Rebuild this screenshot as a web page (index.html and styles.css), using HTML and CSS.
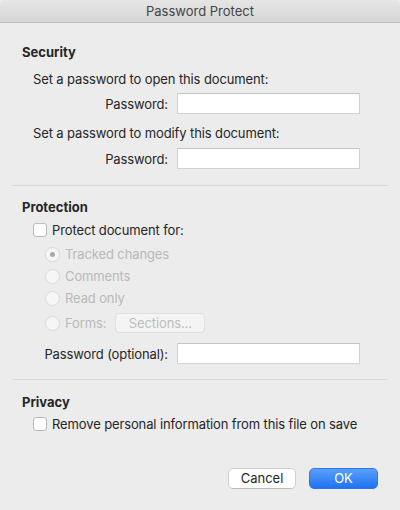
FILE: index.html
```html
<!DOCTYPE html>
<html lang="en">
<head>
<meta charset="utf-8">
<title>Password Protect</title>
<link rel="stylesheet" href="styles.css">
</head>
<body>
<div class="window">
  <div class="titlebar">Password Protect</div>
  <div class="content">
    <section class="group">
      <h2 class="group-title">Security</h2>
      <p class="desc desc-first">Set a password to open this document:</p>
      <div class="field field-a">
        <span class="field-label">Password:</span>
        <span class="text-input"></span>
      </div>
      <p class="desc desc-second">Set a password to modify this document:</p>
      <div class="field field-b">
        <span class="field-label">Password:</span>
        <span class="text-input"></span>
      </div>
    </section>
    <div class="sep sep-a"></div>
    <section class="group">
      <h2 class="group-title title-protection">Protection</h2>
      <div class="check check-protect"><span class="box"></span><span>Protect document for:</span></div>
      <div class="radios">
        <div class="radio"><span class="circle selected"></span><span>Tracked changes</span></div>
        <div class="radio"><span class="circle"></span><span>Comments</span></div>
        <div class="radio"><span class="circle"></span><span>Read only</span></div>
        <div class="radio radio-forms"><span class="circle"></span><span>Forms:</span><span class="btn-sections">Sections...</span></div>
      </div>
      <div class="field field-c">
        <span class="field-label">Password (optional):</span>
        <span class="text-input"></span>
      </div>
    </section>
    <div class="sep sep-b"></div>
    <section class="group">
      <h2 class="group-title title-privacy">Privacy</h2>
      <div class="check check-privacy"><span class="box"></span><span>Remove personal information from this file on save</span></div>
    </section>
    <div class="actions">
      <span class="btn btn-cancel">Cancel</span>
      <span class="btn btn-ok">OK</span>
    </div>
  </div>
</div>
</body>
</html>
```
FILE: styles.css
```css
* { box-sizing: border-box; }
html, body { margin: 0; padding: 0; }
body {
  background: #ececec;
  font-family: Inter, "Liberation Sans", sans-serif;
  font-size: 13px;
  letter-spacing: -0.12px;
  color: #262626;
  width: 400px;
  height: 510px;
  overflow: hidden;
}
.window {
  width: 400px;
  height: 510px;
  background: #ececec;
  border-radius: 5px 5px 0 0;
  overflow: hidden;
}
.titlebar {
  height: 23px;
  line-height: 22px;
  text-align: center;
  color: #444;
  letter-spacing: 0;
  background: linear-gradient(#e6e6e6, #d5d5d5);
  border-bottom: 1px solid #bdbdbd;
}
.content {
  padding: 0 12px;
  display: flex;
  flex-direction: column;
}
.group { display: flex; flex-direction: column; }
.group-title {
  margin: 21px 0 0;
  padding-left: 10px;
  font-size: 13px;
  font-weight: 700;
  line-height: 16px;
  letter-spacing: 0;
}
.title-protection { margin-top: 13px; }
.title-privacy { margin-top: 14px; }
.desc {
  margin: 11px 0 0;
  padding-left: 21px;
  line-height: 16px;
}
.field {
  display: flex;
  align-items: center;
  gap: 9px;
  padding-left: 21px;
  height: 21px;
}
.field-a { margin-top: 6px; }
.field-b { margin-top: 7px; }
.field-c { margin-top: 10px; }
.field-label {
  width: 135px;
  text-align: right;
}
.text-input {
  width: 183px;
  height: 21px;
  background: #fff;
  border: 1px solid #d2d2d2;
  border-top-color: #c4c4c4;
}
.sep {
  height: 1px;
  background: #d8d8d8;
}
.sep-a { margin-top: 16px; }
.sep-b { margin-top: 15px; }
.check {
  display: flex;
  align-items: center;
  gap: 5px;
  padding-left: 21px;
  height: 16px;
}
.check-protect { margin-top: 7px; }
.check-privacy { margin-top: 6px; }
.box {
  width: 14px;
  height: 14px;
  background: #fff;
  border: 1px solid #bcbcbc;
  border-radius: 3px;
  flex: none;
}
.radios {
  margin-top: 5px;
  padding-left: 33px;
  display: flex;
  flex-direction: column;
  color: #b9b9b9;
}
.radio {
  display: flex;
  align-items: center;
  gap: 5px;
  height: 22px;
}
.radio-forms {
  height: 20px;
  margin-top: 4px;
}
.circle {
  width: 15px;
  height: 15px;
  border-radius: 50%;
  background: #f6f6f6;
  border: 1px solid #dadada;
  flex: none;
  display: flex;
  align-items: center;
  justify-content: center;
}
.circle.selected::after {
  content: "";
  width: 5px;
  height: 5px;
  border-radius: 50%;
  background: #a9a9a9;
}
.btn-sections {
  margin-left: 4px;
  width: 90px;
  height: 20px;
  line-height: 18px;
  text-align: center;
  background: #f4f4f4;
  border: 1px solid #e0e0e0;
  border-radius: 4px;
  color: #bdbdbd;
}
.actions {
  margin-top: 36px;
  padding-right: 10px;
  display: flex;
  justify-content: flex-end;
  gap: 13px;
}
.btn {
  height: 21px;
  line-height: 19px;
  text-align: center;
  border-radius: 5px;
  letter-spacing: 0;
}
.btn-cancel {
  width: 68px;
  background: #fff;
  border: 1px solid #cfcfcf;
  border-bottom-color: #bdbdbd;
  color: #262626;
}
.btn-ok {
  width: 69px;
  background: linear-gradient(#5aa0f9, #1f72f2);
  border: 1px solid #2b78ee;
  color: #fff;
}
```
